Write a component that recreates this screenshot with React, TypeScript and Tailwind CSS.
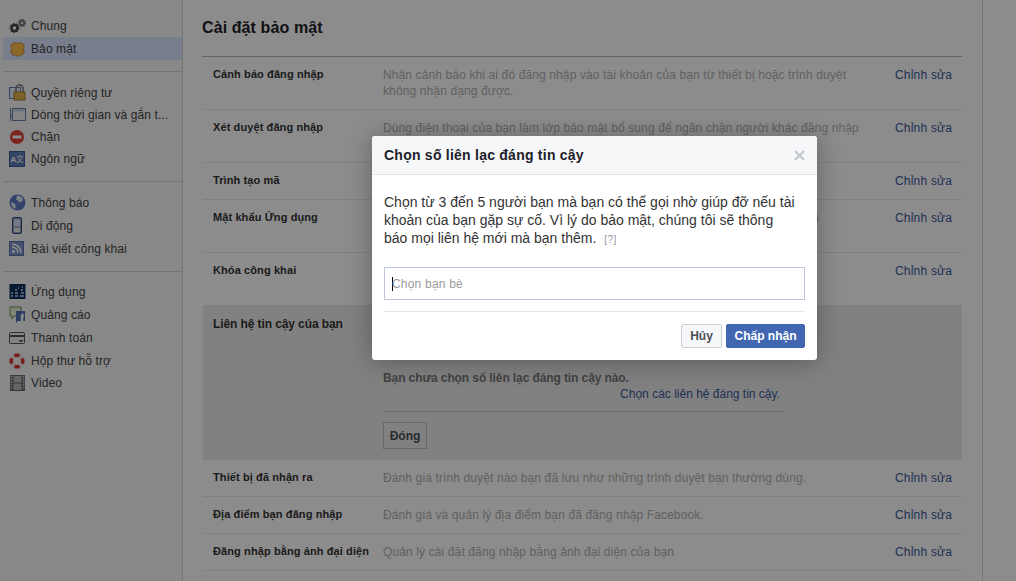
import type { FC, ReactNode } from "react";

const Svg: FC<{ children: ReactNode }> = ({ children }) => (
	<svg width="18" height="18" viewBox="0 0 18 18" className="block">
		{children}
	</svg>
);

const icons: Record<string, ReactNode> = {
	gears: (
		<Svg>
			<circle cx="5.5" cy="11" r="3" fill="none" stroke="#444" strokeWidth="2.4" />
			<circle cx="5.5" cy="11" r="4.4" fill="none" stroke="#444" strokeWidth="1.2" strokeDasharray="1.6 1.5" />
			<circle cx="13" cy="6" r="2.2" fill="none" stroke="#777" strokeWidth="2" />
			<circle cx="13" cy="6" r="3.6" fill="none" stroke="#777" strokeWidth="1.1" strokeDasharray="1.4 1.4" />
		</Svg>
	),
	badge: (
		<Svg>
			<path d="M4 3h9l2 2v3l-1 1 1 1v3l-2 2h-2l-2 1.500-2-1.500H4l-2-2v-3l1-1-1-1V5z" fill="#ffc04c" stroke="#b5812c" strokeWidth="0.8" />
		</Svg>
	),
	lock: (
		<Svg>
			<rect x="0.5" y="3.5" width="11" height="11" fill="#e6ecf7" stroke="#5f7cab" />
			<path d="M7 8V4.5a3.5 3.5 0 0 1 7 0V8" fill="none" stroke="#777" strokeWidth="1.6" />
			<rect x="5" y="8" width="11" height="8" fill="#e0b44c" stroke="#a5802d" />
		</Svg>
	),
	timeline: (
		<Svg>
			<rect x="3.5" y="2.5" width="13" height="12" fill="#f3f3f3" stroke="#6b7fa3" />
			<rect x="4" y="3" width="12" height="2.5" fill="#c4cfe2" />
			<path d="M3.5 8.5 1 10l2.5 1.5M1.5 2v13" fill="none" stroke="#6b7fa3" />
		</Svg>
	),
	block: (
		<Svg>
			<circle cx="8" cy="9" r="7" fill="#e0403a" />
			<rect x="3.5" y="7.5" width="9" height="3" fill="#fff" />
		</Svg>
	),
	lang: (
		<Svg>
			<rect x="0.5" y="1.5" width="15" height="15" fill="#5f7cb8" stroke="#3f5a94" />
			<text x="1.5" y="12" fontSize="8" fontWeight="700" fill="#fff" fontFamily="'Liberation Sans', sans-serif">A</text>
			<text x="7" y="12" fontSize="7.5" fill="#fff" fontFamily="'Noto Sans CJK SC', sans-serif">文</text>
		</Svg>
	),
	globe: (
		<Svg>
			<circle cx="8.5" cy="8.5" r="8" fill="#5c78c4" />
			<path d="M8 1.5c3 .4 5 1.500 6 3l-1 3-3 1-1-2-2-1zM2 8l3 1 2 3-1 3C3.500 14 2 11 2 8z" fill="#dfe5f2" />
		</Svg>
	),
	phone: (
		<Svg>
			<rect x="3.500" y="0.5" width="9" height="16" rx="1.500" fill="#8fa3c9" stroke="#33466e" />
			<rect x="5" y="2.500" width="6" height="7" fill="#d3dcee" />
			<rect x="5" y="11" width="6" height="4" fill="#e8e8e8" />
		</Svg>
	),
	rss: (
		<Svg>
			<rect x="0.5" y="1.500" width="14" height="14" fill="#7c93c7" stroke="#5a72a8" />
			<circle cx="4.500" cy="11.500" r="1.500" fill="#fff" />
			<path d="M3 7a6 6 0 0 1 6 6M3 4a9 9 0 0 1 9 9" fill="none" stroke="#fff" strokeWidth="1.600" />
		</Svg>
	),
	apps: (
		<Svg>
			<rect x="0.5" y="1" width="16" height="15" fill="#0d2f5e" />
			<path d="M2 13h2M6 13h3M11 13h4M2 10h2M6 10h3M12 10h3M6 7h2M12 7h2M9 5h1M13 4h1" stroke="#bcd3ee" strokeWidth="1.600" />
		</Svg>
	),
	ads: (
		<Svg>
			<path d="M1 1h11v9H5l-2 3v-3H1z" fill="#e6f0d8" stroke="#6f9a52" />
			<path d="M7 5h9v10H9l-2 2z" fill="#5472b2" />
			<path d="M13.500 15V10h1.500M11.500 11.500h3M12.500 15V9.500q0-1.500 2-1.500" fill="none" stroke="#fff" strokeWidth="1.300" />
		</Svg>
	),
	card: (
		<Svg>
			<rect x="0.5" y="3.500" width="15" height="11" rx="1" fill="#f2f2f2" stroke="#555" />
			<rect x="1" y="6" width="14" height="2" fill="#555" />
			<rect x="10" y="11" width="4" height="1.500" fill="#555" />
		</Svg>
	),
	help: (
		<Svg>
			<circle cx="8" cy="9" r="6" fill="none" stroke="#e8e8e8" strokeWidth="3.400" />
			<path d="M8 1.500a7.500 7.500 0 0 1 3 .6L10 5.500a4 4 0 0 0-4 0L5 2.100A7.500 7.500 0 0 1 8 1.500zM8 16.500a7.500 7.500 0 0 0 3-.6L10 12.500a4 4 0 0 1-4 0l-1 3.400a7.500 7.500 0 0 0 3 .6zM.5 9a7.500 7.500 0 0 1 .6-3L4.500 7a4 4 0 0 0 0 4l-3.400 1A7.500 7.500 0 0 1 .5 9zM15.500 9a7.500 7.500 0 0 0-.6-3L11.500 7a4 4 0 0 1 0 4l3.400 1a7.500 7.500 0 0 0 .6-3z" fill="#d9322e" />
		</Svg>
	),
	film: (
		<Svg>
			<rect x="1" y="1" width="15" height="16" fill="#6b6b6b" />
			<rect x="4.500" y="2" width="8" height="6.500" fill="#b8b8b8" />
			<rect x="4.500" y="9.500" width="8" height="6.500" fill="#b8b8b8" />
			<path d="M2.500 2v14M14.500 2v14" stroke="#d8d8d8" strokeWidth="1.400" strokeDasharray="1.400 1.400" />
		</Svg>
	),
};

const menuGroups = [
	[
		{ icon: "gears", label: "Chung" },
		{ icon: "badge", label: "Bảo mật", active: true },
	],
	[
		{ icon: "lock", label: "Quyền riêng tư" },
		{ icon: "timeline", label: "Dòng thời gian và gắn t..." },
		{ icon: "block", label: "Chặn" },
		{ icon: "lang", label: "Ngôn ngữ" },
	],
	[
		{ icon: "globe", label: "Thông báo" },
		{ icon: "phone", label: "Di động" },
		{ icon: "rss", label: "Bài viết công khai" },
	],
	[
		{ icon: "apps", label: "Ứng dụng" },
		{ icon: "ads", label: "Quảng cáo" },
		{ icon: "card", label: "Thanh toán" },
		{ icon: "help", label: "Hộp thư hỗ trợ" },
		{ icon: "film", label: "Video" },
	],
];

const topRows = [
	{
		title: "Cảnh báo đăng nhập",
		body: "Nhận cảnh báo khi ai đó đăng nhập vào tài khoản của bạn từ thiết bị hoặc trình duyệt không nhận dạng được.",
		h: "h-[53px]",
	},
	{
		title: "Xét duyệt đăng nhập",
		body: "Dùng điện thoại của bạn làm lớp bảo mật bổ sung để ngăn chặn người khác đăng nhập",
		h: "h-[53px]",
	},
	{ title: "Trình tạo mã", body: "", h: "h-[37px]" },
	{
		title: "Mật khẩu Ứng dụng",
		body: "Dùng mật khẩu ứng dụng đặc biệt để đăng nhập vào ứng dụng thay vì mật khẩu",
		h: "h-[53px]",
	},
	{
		title: "Khóa công khai",
		body: "Quản lý khóa công khai của bạn để mã hóa email thông báo và các thông",
		h: "h-[53px]",
	},
];

const bottomRows = [
	{
		title: "Thiết bị đã nhận ra",
		body: "Đánh giá trình duyệt nào bạn đã lưu như những trình duyệt bạn thường dùng.",
	},
	{
		title: "Địa điểm bạn đăng nhập",
		body: "Đánh giá và quản lý địa điểm bạn đã đăng nhập Facebook.",
	},
	{
		title: "Đăng nhập bằng ảnh đại diện",
		body: "Quản lý cài đặt đăng nhập bằng ảnh đại diện của bạn",
	},
];

const Row: FC<{ title: string; body: string; h: string }> = ({ title, body, h }) => (
	<div className={`flex border-b border-[#e9e9e9] pl-[10px] pt-[9px] ${h}`}>
		<div className="w-[170px] shrink-0 text-[11px] leading-[16px] font-bold tracking-[0.1px] text-[#333]">
			{title}
		</div>
		<div className="mt-px w-[512px] shrink-0 pr-[20px] text-[12px] leading-[16px] tracking-[0.12px] text-[#b0b0b0]">
			{body}
		</div>
		<a className="mt-px text-[12px] leading-[16px] tracking-[0.2px] text-[#3b5998]">Chỉnh sửa</a>
	</div>
);

const App: FC = () => {
	return (
		<div className="relative flex h-[581px] w-[1016px] overflow-hidden bg-white font-['Liberation_Sans',sans-serif]">
			<aside className="w-[183px] shrink-0 border-r border-[#d8d8d8] bg-[#f7f7f7] pl-[3px] pt-[14px]">
				{menuGroups.map((group, i) => (
					<div
						key={i}
						className={`border-b border-[#d3d3d3] first:pt-0 last:border-b-0 ${
							i === 1 ? "pb-[11px] pt-[10px]" : "pb-[11px] pt-[9px]"
						}`}
					>
						{group.map((item) => (
							<div
								key={item.label}
								className={`flex items-center pl-[6px] text-[12px] tracking-[0.1px] text-[#444] ${
									i === 1 ? "h-[22px]" : i === 3 ? "h-[22.75px]" : "h-[23px]"
								} ${item.active ? "bg-[#dbe5ff] text-[#222]" : ""}`}
							>
								<span className="mr-[4px] w-[18px] shrink-0">{icons[item.icon]}</span>
								<span className="whitespace-nowrap">{item.label}</span>
							</div>
						))}
					</div>
				))}
			</aside>

			<main className="w-[800px] shrink-0 border-r border-[#d8d8d8] bg-white px-[20px]">
				<h1 className="-ml-px flex h-[57px] items-start border-b border-[#b5b5b5] pl-px pt-[17px] text-[16px] leading-[22px] font-bold tracking-[0.1px] text-[#1d2129]">
					<span className="-ml-px">Cài đặt bảo mật</span>
				</h1>
				{topRows.map((row) => (
					<Row key={row.title} {...row} />
				))}
				<div className="flex h-[154px] bg-[#ececec] pl-[10px] pt-[10px]">
					<div className="w-[170px] shrink-0 text-[12px] leading-[16px] font-bold tracking-[-0.1px] text-[#333]">
						Liên hệ tin cậy của bạn
					</div>
					<div className="w-[400px] shrink-0 pt-[54px]">
						<p className="text-[12px] leading-[16px] font-bold tracking-[-0.1px] text-[#777]">
							Bạn chưa chọn số liên lạc đáng tin cậy nào.
						</p>
						<p className="pr-[3px] text-right text-[12px] leading-[16px] text-[#3b5998]">
							Chọn các liên hệ đáng tin cậy<span className="text-[#777]">.</span>
						</p>
						<div className="mt-[9px] border-t border-[#c4c4c4] pt-[10px]">
							<button className="h-[27px] w-[44px] border border-[#bbb] bg-transparent text-[12px] font-bold text-[#4b4f56]">
								Đóng
							</button>
						</div>
					</div>
				</div>
				{bottomRows.map((row) => (
					<Row key={row.title} {...row} h="h-[37px]" />
				))}
			</main>

			<div className="flex-1 bg-white" />

			{/* dim layer behind the dialog */}
			<div className="absolute inset-0 bg-black/45" />

			<div className="absolute left-[372px] top-[136px] h-[224px] w-[445px] overflow-hidden rounded-[3px] bg-white shadow-[0_2px_26px_rgba(0,0,0,0.3)]">
				<div className="flex h-[39px] items-center justify-between border-b border-[#e5e5e5] bg-[#f6f7f9] pl-[12px] pr-[12px]">
					<span className="text-[14px] font-bold tracking-[0.24px] text-[#1d2129]">
						Chọn số liên lạc đáng tin cậy
					</span>
					<svg width="11" height="11" viewBox="0 0 11 11">
						<path d="M1 1l9 9M10 1l-9 9" stroke="#c4c8cf" strokeWidth="2.400" />
					</svg>
				</div>
				<div className="px-[12px] pt-[18px]">
					<p className="w-[412px] text-[14px] leading-[18px] text-[#333]">
						Chọn từ 3 đến 5 người bạn mà bạn có thể gọi nhờ giúp đỡ nếu tài khoản của bạn gặp sự cố. Vì lý do bảo mật, chúng tôi sẽ thông báo mọi liên hệ mới mà bạn thêm.{" "}
						<span className="ml-[4px] text-[10px] tracking-[0.5px] text-[#90949c]">[?]</span>
					</p>
					<div className="mt-[18px] flex h-[33px] items-center border border-[#bdc7d8] pl-[7px] text-[12px] tracking-[0.2px] text-[#9a9a9a]">
						<span className="mr-[-1px] h-[14px] w-px bg-black" />
						<span>Chọn bạn bè</span>
					</div>
					<div className="mt-[11px] border-t border-[#e5e5e5]" />
					<div className="mt-[12px] flex justify-end gap-[4px]">
						<button className="h-[24px] w-[41px] rounded-[2px] border border-[#ccd0d5] bg-[#f6f7f9] text-[12px] font-bold text-[#4b4f56]">
							Hủy
						</button>
						<button className="h-[24px] w-[79px] rounded-[2px] border border-[#4267b2] bg-[#4267b2] text-[12px] font-bold text-white">
							Chấp nhận
						</button>
					</div>
				</div>
			</div>
		</div>
	);
};

export default App;
